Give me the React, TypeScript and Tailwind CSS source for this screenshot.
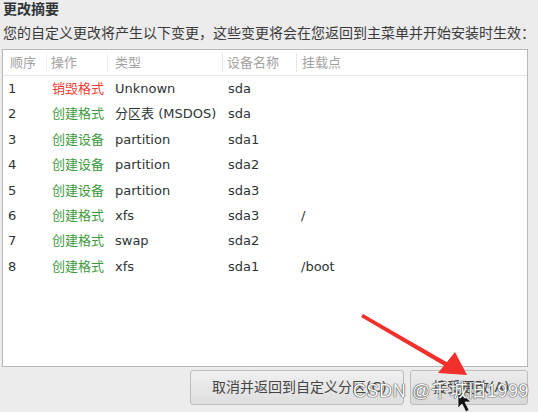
const rows = [
  { n: '1', op: '销毁格式', destroy: true, type: 'Unknown', dev: 'sda', mount: '' },
  { n: '2', op: '创建格式', type: '分区表 (MSDOS)', dev: 'sda', mount: '' },
  { n: '3', op: '创建设备', type: 'partition', dev: 'sda1', mount: '' },
  { n: '4', op: '创建设备', type: 'partition', dev: 'sda2', mount: '' },
  { n: '5', op: '创建设备', type: 'partition', dev: 'sda3', mount: '' },
  { n: '6', op: '创建格式', type: 'xfs', dev: 'sda3', mount: '/' },
  { n: '7', op: '创建格式', type: 'swap', dev: 'sda2', mount: '' },
  { n: '8', op: '创建格式', type: 'xfs', dev: 'sda1', mount: '/boot' },
];

const font = { fontFamily: '"DejaVu Sans", "Noto Sans CJK SC", sans-serif' };

export default function App() {
  return (
    <div
      className="relative w-[538px] h-[412px] overflow-hidden bg-[#ececec] text-[#2e3436]"
      style={font}
    >
      {/* 标题 */}
      <div className="pl-[3px] h-[21px] text-[14px] font-bold leading-[18px]">更改摘要</div>
      <div className="pl-[3px] h-[28px] text-[14px] leading-[24px] text-[#3a3a3a]">
        您的自定义更改将产生以下变更，这些变更将会在您返回到主菜单并开始安装时生效：
      </div>

      {/* 表格 */}
      <div className="ml-[2px] w-[526px] h-[318px] bg-white border border-[#b8b8b8] text-[13px]">
        <div className="flex h-[26px] items-center border-b border-[#e6e6e6] text-[#a2a2a2]">
          <div className="w-[44px] pl-[7px] border-r border-[#eeeeee]">顺序</div>
          <div className="w-[61px] pl-[4px] border-r border-[#eeeeee]">操作</div>
          <div className="w-[115px] pl-[7px] border-r border-[#e6e6e6]">类型</div>
          <div className="w-[74px] pl-[4px] border-r border-[#e6e6e6]">设备名称</div>
          <div className="flex-1 pl-[5px]">挂载点</div>
        </div>
        {rows.map((r) => (
          <div key={r.n} className="flex h-[25.4px] items-center">
            <div className="w-[45px] pl-[5px]">{r.n}</div>
            <div className={`w-[62px] pl-[4px] ${r.destroy ? 'text-[#ef3b32]' : 'text-[#3e9a3e]'}`}>
              {r.op}
            </div>
            <div className="w-[115px] pl-[5px]">{r.type}</div>
            <div className="w-[74px] pl-[3px]">{r.dev}</div>
            <div className="flex-1 pl-[2px]">{r.mount}</div>
          </div>
        ))}
      </div>

      {/* 按钮 */}
      <div className="flex pl-[190px] pt-[3px] gap-[6px]">
        <button className="w-[214px] h-[35px] rounded-[3px] border border-[#bdbdbd] bg-gradient-to-b from-[#f0f0f0] to-[#dedede] text-[14px] text-[#444] text-left pl-[21px] whitespace-nowrap">
          取消并返回到自定义分区(C)
        </button>
        <button className="w-[118px] h-[35px] rounded-[3px] border border-[#bdbdbd] bg-gradient-to-b from-[#ececec] to-[#d9d9d9] text-[14px] text-[#444] text-left pl-[22px] whitespace-nowrap">
          接受更改(A)
        </button>
      </div>

      {/* 红色箭头 */}
      <svg className="absolute left-0 top-0 pointer-events-none" width="538" height="412">
        <polygon points="361,317 363,314 450,364 448,368" fill="#f2302b" />
        <polygon points="467,375 438,373 455,352" fill="#f2302b" />
        {/* 鼠标 */}
        <polygon points="458,390 458,408 462,404 466,412 469,410 465,402 471,402" fill="#111" stroke="#eee" strokeWidth="0.8" />
      </svg>

      {/* 水印 */}
      <div
        className="absolute left-[353px] top-[381px] text-[18px] leading-[20px] tracking-[0.6px] text-white [text-shadow:0_0_1px_#444,0_0_1px_#444,0_0_1px_#444]"
        style={{ fontFamily: '"Liberation Sans", "Noto Sans CJK SC", sans-serif' }}
      >
        CSDN @千城旧1999
      </div>
    </div>
  );
}
